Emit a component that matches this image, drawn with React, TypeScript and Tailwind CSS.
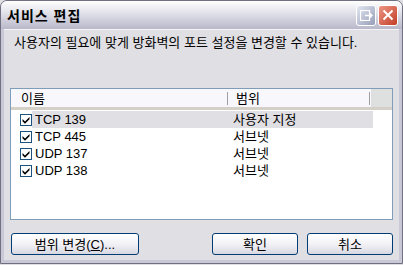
import React from "react";

const font = { fontFamily: '"Liberation Sans", "Noto Sans CJK KR", sans-serif' };

function Check() {
  return (
    <span className="w-[12px] h-[12px] border border-[#1c5180] bg-white flex items-center justify-center shrink-0">
      <svg width="8" height="8" viewBox="0 0 8 8">
        <path d="M0.5 3 L3 5.5 L7.5 1 L7.5 3.2 L3 7.7 L0.5 5.2 Z" fill="#000" />
      </svg>
    </span>
  );
}

function Row({ name, range, sel }: { name: string; range: string; sel?: boolean }) {
  return (
    <div className="flex h-[17px] items-center leading-[17px]">
      <div className="w-[9px]" />
      <Check />
      <div className={`flex h-full items-center w-[341px] ${sel ? "bg-[#e0dfe3]" : ""}`}>
        <span className="w-[201px] pl-[3px] text-[13px] text-black whitespace-nowrap">{name}</span>
        <span className="text-[13px] text-black whitespace-nowrap">{range}</span>
      </div>
    </div>
  );
}

function Btn({ label, w }: { label: React.ReactNode; w: string }) {
  return (
    <div className={`${w} h-[22px] rounded-[3px] border border-[#003c74] bg-gradient-to-b from-white via-[#f2f2f6] to-[#d8d8e2] flex items-center justify-center text-[13px] leading-none text-black`}>
      {label}
    </div>
  );
}

export default function App() {
  return (
    <div className="w-[403px] h-[265px] bg-[#e0dfe3] relative overflow-hidden" style={font}>
      <div className="absolute inset-x-0 top-0 h-[264px] rounded-t-[7px] border border-[#707082] bg-[#c8c8d6] flex flex-col">
        {/* title bar */}
        <div className="h-[28px] rounded-t-[6px] bg-gradient-to-b from-[#ffffff] via-[#dcdce6] to-[#b8b8ca] flex items-center pl-[6px] pr-[4px]">
          <span className="font-bold text-[14px] leading-none text-black flex-1 tracking-[1px] pt-[1px]">서비스 편집</span>
          <div className="w-[20px] h-[21px] rounded-[3px] border border-white bg-gradient-to-br from-[#e4e8f2] to-[#959db8] flex items-center justify-center mr-[2px]">
            <svg width="13" height="11" viewBox="0 0 13 11">
              <rect x="0.5" y="0.5" width="9" height="10" fill="none" stroke="white" strokeWidth="1.2" />
              <path d="M5 5.5 H12 M9.5 3 L12 5.5 L9.5 8" stroke="white" strokeWidth="1.4" fill="none" />
            </svg>
          </div>
          <div className="w-[20px] h-[21px] rounded-[3px] border border-white bg-gradient-to-br from-[#ec9584] to-[#c13b24] flex items-center justify-center">
            <svg width="12" height="12" viewBox="0 0 12 12">
              <path d="M1.5 1.5 L10.5 10.5 M10.5 1.5 L1.5 10.5" stroke="white" strokeWidth="2" />
            </svg>
          </div>
        </div>
        {/* client */}
        <div className="flex-1 mx-[3px] mb-[3px] bg-[#e0dfe3] border-t border-[#f4f4f8] flex flex-col px-[6px]">
          <div className="text-[13px] leading-[17px] text-black pt-[4px] pl-[4px] h-[58px] whitespace-nowrap">사용자의 필요에 맞게 방화벽의 포트 설정을 변경할 수 있습니다.</div>
          <div className="h-[132px] border border-[#7f9db9] bg-white flex flex-col">
            <div className="flex h-[21px] border-b-[3px] border-[#d4d0c8] bg-[#f8f8fc] text-[13px] leading-none text-black">
              <div className="w-[217px] pl-[10px] flex items-center relative">
                이름
                <span className="absolute right-0 top-[3px] h-[13px] w-[1px] bg-[#a0a0a0]" />
              </div>
              <div className="w-[143px] pl-[8px] flex items-center relative">
                범위
                <span className="absolute right-[1px] top-[3px] h-[13px] w-[1px] bg-[#a0a0a0]" />
              </div>
              <div className="flex-1 bg-[#dde0de]" />
            </div>
            <div className="pt-[1px] flex-1">
              <Row name="TCP 139" range="사용자 지정" sel />
              <Row name="TCP 445" range="서브넷" />
              <Row name="UDP 137" range="서브넷" />
              <Row name="UDP 138" range="서브넷" />
            </div>
          </div>
          <div className="flex mt-[13px] pl-[1px]">
            <Btn w="w-[128px]" label={<span>범위 변경(<u>C</u>)...</span>} />
            <div className="flex-1" />
            <Btn w="w-[86px]" label="확인" />
            <div className="w-[9px]" />
            <Btn w="w-[86px]" label="취소" />
          </div>
        </div>
      </div>
    </div>
  );
}
